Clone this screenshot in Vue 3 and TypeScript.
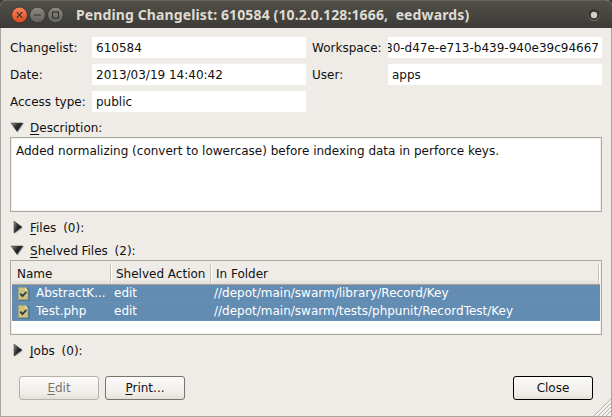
<script setup lang="ts">
interface ShelvedFile {
  name: string
  action: string
  folder: string
}

const files: ShelvedFile[] = [
  { name: 'AbstractK...', action: 'edit', folder: '//depot/main/swarm/library/Record/Key' },
  { name: 'Test.php', action: 'edit', folder: '//depot/main/swarm/tests/phpunit/RecordTest/Key' },
]
const title = 'Pending Changelist: 610584 (10.2.0.128:1666,  eedwards)'
</script>

<template>
  <div class="window">
    <header class="titlebar">
      <svg class="controls" width="54" height="18" viewBox="0 0 54 18">
        <defs>
          <linearGradient id="orange" x1="0" y1="0" x2="0" y2="1">
            <stop offset="0" stop-color="#f88460" />
            <stop offset="1" stop-color="#e04a1c" />
          </linearGradient>
          <linearGradient id="grey" x1="0" y1="0" x2="0" y2="1">
            <stop offset="0" stop-color="#8b8983" />
            <stop offset="1" stop-color="#63625c" />
          </linearGradient>
        </defs>
        <g stroke="#302f2b" stroke-width=".8">
          <circle cx="8.5" cy="9" r="7.9" fill="url(#orange)" />
          <circle cx="26.5" cy="9" r="7.9" fill="url(#grey)" />
          <circle cx="44.5" cy="9" r="7.9" fill="url(#grey)" />
        </g>
        <g fill="none" stroke="#35342f" stroke-width="1.2">
          <path d="M5.700 6.200l5.600 5.600M11.300 6.200l-5.600 5.600M23 9h7" />
          <rect x="41.5" y="6" width="6" height="6" />
        </g>
      </svg>
      <h1 class="title">{{ title }}</h1>
      <svg class="dot" width="14" height="14" viewBox="0 0 14 14">
        <circle cx="7" cy="7.6" r="5.5" fill="#777670" />
        <circle cx="7" cy="6.7" r="5.5" fill="#373632" />
        <circle cx="7" cy="7" r="3.2" fill="#d3cec4" />
      </svg>
    </header>

    <main class="body">
      <div class="form">
        <label>Changelist:</label><div class="field">610584</div>
        <label class="second">Workspace:</label><div class="field tail"><span>80-d47e-e713-b439-940e39c94667</span></div>
        <label>Date:</label><div class="field">2013/03/19 14:40:42</div>
        <label class="second">User:</label><div class="field">apps</div>
        <label>Access type:</label><div class="field">public</div>
      </div>

      <div class="section first">
        <svg class="arrow" width="14" height="14" viewBox="0 0 14 14">
          <defs>
            <linearGradient id="tri" x1="0" y1="0" x2="1" y2="0.6">
              <stop offset="0" stop-color="#9a9a9a" />
              <stop offset="0.5" stop-color="#303030" />
              <stop offset="1" stop-color="#111" />
            </linearGradient>
          </defs>
          <path d="M2 3.5h12L8 12.500z" fill="#a8a6a2" opacity=".7" />
          <path d="M1 3h12L7 11.500z" fill="url(#tri)" stroke="#333" stroke-width=".5" />
        </svg>
        <span><u>D</u>escription:</span>
      </div>
      <div class="box description">Added normalizing (convert to lowercase) before indexing data in perforce keys.</div>

      <div class="section files">
        <svg class="arrow" width="14" height="14" viewBox="0 0 14 14">
          <path d="M4.5 2v12L13 8z" fill="#a8a6a2" opacity=".7" />
          <path d="M4 1v12l8-6z" fill="url(#tri)" stroke="#333" stroke-width=".5" />
        </svg>
        <span><u>F</u>iles&nbsp; (0):</span>
      </div>
      <div class="section shelved">
        <svg class="arrow" width="14" height="14" viewBox="0 0 14 14">
          <path d="M2 3.5h12L8 12.500z" fill="#a8a6a2" opacity=".7" />
          <path d="M1 3h12L7 11.500z" fill="url(#tri)" stroke="#333" stroke-width=".5" />
        </svg>
        <span><u>S</u>helved Files&nbsp; (2):</span>
      </div>

      <div class="box table">
        <div class="row head">
          <span>Name</span><span>Shelved Action</span><span>In Folder</span>
        </div>
        <div v-for="file in files" :key="file.name" class="row item">
          <span class="name">
            <svg width="13" height="15" viewBox="0 0 13 15">
              <path d="M2 2h9l1.500 2v11H2z" fill="#3c607f" opacity=".65" />
              <path d="M1.300 1.300h6.700l3 3v9.400H1.300z" fill="#cdc37d" stroke="#9a9a78" stroke-width=".7" />
              <path d="M8 1.300v3h3z" fill="#e9e5c2" />
              <path d="M3.300 7.700l2.200 2.400L9.300 6" fill="none" stroke="#26384a" stroke-width="1.800" />
            </svg>
            {{ file.name }}
          </span>
          <span>{{ file.action }}</span>
          <span>{{ file.folder }}</span>
        </div>
      </div>

      <div class="section jobs">
        <svg class="arrow" width="14" height="14" viewBox="0 0 14 14">
          <path d="M4.5 2v12L13 8z" fill="#a8a6a2" opacity=".7" />
          <path d="M4 1v12l8-6z" fill="url(#tri)" stroke="#333" stroke-width=".5" />
        </svg>
        <span><u>J</u>obs&nbsp; (0):</span>
      </div>

      <footer class="actions">
        <button class="disabled" disabled><u>E</u>dit</button>
        <button><u>P</u>rint...</button>
        <button class="default">Close</button>
      </footer>
    </main>

    <svg class="grip" width="18" height="18" viewBox="0 0 18 18">
      <path d="M1 18L18 1M5 18L18 5M9 18L18 9M13 18L18 13" stroke="#b5b1ab" />
      <path d="M2.500 18L18 2.500M6.500 18L18 6.500M10.500 18L18 10.500M14.500 18L18 14.500" stroke="#fff" />
    </svg>
  </div>
</template>

<style>
body {
  background: #3a3935;
}
</style>

<style scoped>
.window {
  position: relative;
  box-sizing: border-box;
  width: 612px;
  height: 417px;
  overflow: hidden;
  border-radius: 6px 6px 0 0;
  background: #efebe7;
  font: 12px/18px "DejaVu Sans", sans-serif;
  color: #111;
}
.titlebar {
  display: flex;
  align-items: center;
  box-sizing: border-box;
  height: 28px;
  padding: 0 11px;
  border-top: 1px solid #63625c;
  background: linear-gradient(#504f49, #3c3b37);
}
.controls {
  flex: none;
}
.title {
  flex: 1;
  margin: 0 0 0 11px;
  padding-top: 1px;
  font: bold 14px/20px "Noto Sans", "Open Sans", sans-serif;
  letter-spacing: 0.12px;
  color: #dfdbd2;
  white-space: pre;
}
.body {
  box-sizing: border-box;
  height: 389px;
  padding: 9px 9px 0 9px;
  border: 1px solid #aaa69f;
  border-top: 0;
}
.form {
  display: grid;
  grid-template-columns: 82px 214px 82px 214px;
  grid-auto-rows: 21px;
  row-gap: 6px;
  line-height: 22px;
  white-space: nowrap;
}
.second {
  padding-left: 6px;
}
.field {
  box-sizing: border-box;
  padding: 0 4px;
  overflow: hidden;
  background: #fff;
}
.tail {
  display: flex;
  justify-content: flex-end;
  padding-right: 3px;
}
.section {
  display: flex;
  align-items: flex-start;
  box-sizing: border-box;
  height: 30px;
  padding-top: 7px;
  word-spacing: -0.4px;
}
.section span {
  margin-left: 6px;
}
.first {
  height: 25px;
}
.shelved {
  height: 18px;
  padding-top: 0;
}
.arrow {
  flex: none;
  margin-top: 1px;
}
u {
  text-decoration: underline;
  text-underline-offset: 2px;
  text-decoration-thickness: 1px;
  text-decoration-skip-ink: none;
}
.box {
  box-sizing: border-box;
  width: 592px;
  height: 75px;
  border: 1px solid #aca8a0;
  background: #fff;
  box-shadow: inset 0 0 0 1px #f3f0ec;
}
.description {
  padding: 4px 5px;
}
.table {
  padding: 0 1px;
}
.row {
  display: grid;
  grid-template-columns: 99px 100px 389px;
  white-space: nowrap;
}
.head {
  box-sizing: border-box;
  height: 24px;
  padding-top: 4px;
  border-bottom: 1px solid #aca297;
  background: linear-gradient(#efebe7 80%, #e1dcd6);
}
.head span {
  height: 17px;
  box-sizing: border-box;
  padding-left: 5px;
  border-right: 1px solid #c3bfb8;
  box-shadow: 1px 0 #fff;
}
.head span:last-child {
  margin-right: 1px;
}
.item {
  box-sizing: border-box;
  height: 18px;
  border-bottom: 1px dotted #8b8c91;
  background: #628cb2;
  color: #fff;
  line-height: 16px;
}
.item > span {
  padding-left: 3px;
}
.item .name {
  display: flex;
  align-items: flex-start;
  gap: 6px;
  padding-left: 5px;
}
.name svg {
  flex: none;
  margin-top: 1px;
}
.actions {
  display: flex;
  gap: 6px;
  padding: 11px 9px 0;
}
button {
  width: 80px;
  height: 24px;
  padding: 0;
  border: 1px solid #77736d;
  border-radius: 3px;
  background: linear-gradient(#fcfbf9, #f0ede9 75%, #e4dfd8);
  font: inherit;
  color: #111;
}
.disabled {
  border-color: #b5b1ab;
  color: #77746f;
}
.default {
  margin-left: auto;
  border-color: #000;
}
.grip {
  position: absolute;
  right: 1px;
  bottom: 1px;
}
</style>
